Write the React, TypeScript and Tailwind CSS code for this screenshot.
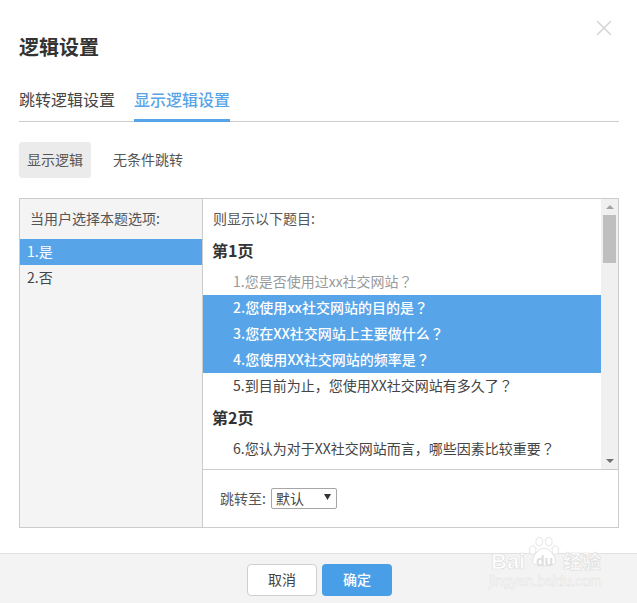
const font = { fontFamily: '"Microsoft YaHei", "Noto Sans CJK SC", "Liberation Sans", sans-serif' };

function Q({ text, tone }: { text: string; tone?: 'muted' | 'active' }) {
  const cls =
    tone === 'active'
      ? 'bg-[#57a4e8] text-white font-medium'
      : tone === 'muted'
        ? 'text-[#999999]'
        : 'text-[#444444]';
  return (
    <div className={`h-[26px] pl-[30px] text-[14px] leading-[24px] whitespace-nowrap ${cls}`}>
      {text}
      <span className="font-['Noto_Sans_CJK_TC']">？</span>
    </div>
  );
}

export default function App() {
  return (
    <div className="relative flex h-[603px] w-[637px] flex-col overflow-hidden bg-white text-[#444444]" style={font}>
      <div className="flex h-[553px] flex-col pr-[18px] pl-[19px]">
        <div className="flex h-[71px] items-start justify-between">
          <h1 className="mt-[33px] text-[20px] leading-[28px] font-bold text-[#333333]">逻辑设置</h1>
          <svg className="mt-[20px] mr-[7px]" width="16" height="16" viewBox="0 0 16 16" fill="none" stroke="#d4d4d4" strokeWidth="1.5">
            <path d="M1 1 L15 15 M15 1 L1 15" />
          </svg>
        </div>
        <div className="flex h-[51px] items-end gap-[19px] border-b border-[#cccccc]">
          <div className="h-[50px] pt-[16px] text-[16px] leading-[24px] text-[#444444]">跳转逻辑设置</div>
          <div className="-mb-px h-[51px] border-b-[3px] border-[#57a4e8] pt-[16px] text-[16px] leading-[24px] font-medium text-[#57a4e8]">显示逻辑设置</div>
        </div>
        <div className="mt-[20px] flex h-[36px] items-center text-[14px] leading-[34px] text-[#555555]">
          <div className="h-[36px] w-[72px] rounded-[3px] bg-[#ebebeb] text-center">显示逻辑</div>
          <div className="ml-[22px] h-[36px]">无条件跳转</div>
        </div>
        <div className="mt-[20px] flex h-[330px] border border-[#cccccc]">
          <div className="w-[183px] shrink-0 border-r border-[#cccccc] bg-[#f4f4f4] text-[14px]">
            <div className="h-[40px] pl-[10px] leading-[39px] text-[#555555]">当用户选择本题选项:</div>
            <div className="h-[26px] bg-[#57a4e8] pl-[7px] leading-[24px] text-white">1.是</div>
            <div className="h-[26px] pl-[7px] leading-[24px] text-[#444444]">2.否</div>
          </div>
          <div className="flex min-w-0 flex-1 flex-col">
            <div className="flex h-[271px] border-b border-[#cccccc]">
              <div className="min-w-0 flex-1 overflow-hidden">
                <div className="h-[40px] pl-[10px] text-[14px] leading-[39px] text-[#555555]">则显示以下题目:</div>
                <div className="h-[30px] pl-[9px] text-[16px] leading-[22px] font-bold text-[#333333]">第1页</div>
                <Q text="1.您是否使用过xx社交网站" tone="muted" />
                <Q text="2.您使用xx社交网站的目的是" tone="active" />
                <Q text="3.您在XX社交网站上主要做什么" tone="active" />
                <Q text="4.您使用XX社交网站的频率是" tone="active" />
                <Q text="5.到目前为止，您使用XX社交网站有多久了" />
                <div className="h-[37px] pl-[9px] text-[16px] leading-[36px] font-bold text-[#333333]">第2页</div>
                <Q text="6.您认为对于XX社交网站而言，哪些因素比较重要" />
              </div>
              <div className="flex w-[17px] shrink-0 flex-col items-center justify-between bg-[#f0f0f0] py-[6px]">
                <div className="flex w-full flex-col items-center">
                  <svg width="8" height="4" viewBox="0 0 8 4" fill="#a3a3a3"><path d="M4 0 L8 4 L0 4 Z" /></svg>
                  <div className="mt-[6px] h-[48px] w-[13px] bg-[#bfbfbf]" />
                </div>
                <svg width="8" height="4" viewBox="0 0 8 4" fill="#6f6f6f"><path d="M0 0 L8 0 L4 4 Z" /></svg>
              </div>
            </div>
            <div className="flex flex-1 items-center pb-[1px] pl-[17px] text-[14px] text-[#555555]">
              <span>跳转至:</span>
              <div className="ml-[5px] flex h-[21px] w-[66px] items-center justify-between rounded-[2px] border border-[#a6a6a6] bg-white pr-[5px] pl-[4px] text-[14px] text-[#444444]">
                <span>默认</span>
                <svg className="-mt-[2px]" width="7" height="6" viewBox="0 0 7 6" fill="#333333"><path d="M0 0 L7 0 L3.5 6 Z" /></svg>
              </div>
            </div>
          </div>
        </div>
      </div>
      <div className="flex flex-1 justify-center gap-[5px] border-t border-[#e2e2e2] bg-[#f3f3f3] pt-[10px] pl-[2px] text-[14px]">
        <button className="h-[32px] w-[70px] rounded-[4px] border border-[#cfcfcf] bg-white pb-[2px] text-[#444444]">取消</button>
        <button className="h-[32px] w-[70px] rounded-[4px] bg-[#489fe8] pb-[2px] font-medium text-white">确定</button>
      </div>
      <div className="pointer-events-none absolute top-[533px] left-[487px] h-[56px] w-[116px] text-white">
        <svg className="absolute top-[2px] left-[40px]" width="34" height="34" viewBox="0 0 36 34" fill="#ffffff" stroke="#e2e2e2" strokeWidth="1">
          <ellipse cx="6" cy="15" rx="3.5" ry="4.5" />
          <ellipse cx="13" cy="6" rx="3.5" ry="4.5" />
          <ellipse cx="23" cy="6" rx="3.5" ry="4.5" />
          <ellipse cx="30" cy="15" rx="3.5" ry="4.5" />
          <path d="M18 13 C12 13 5 22 6 28 C7 33 29 33 30 28 C31 22 24 13 18 13 Z" />
        </svg>
        <div className="absolute top-[18px] left-[4px] text-[22px] leading-[22px] font-bold [-webkit-text-stroke:0.7px_#dedede]" style={{ fontFamily: '"Liberation Sans", sans-serif' }}>Bai</div>
        <div className="absolute top-[19px] left-[49px] text-[14px] leading-[18px] font-bold text-[#dedede]" style={{ fontFamily: '"Liberation Sans", sans-serif' }}>du</div>
        <div className="absolute top-[17px] left-[76px] text-[19px] leading-[22px] font-bold [-webkit-text-stroke:0.7px_#dedede]">经验</div>
        <div className="absolute top-[41px] left-[2px] text-[14px] leading-[15px] whitespace-nowrap [-webkit-text-stroke:0.5px_#e2e2e2]" style={{ fontFamily: '"Liberation Sans", sans-serif' }}>jingyan.baidu.com</div>
      </div>
    </div>
  );
}
